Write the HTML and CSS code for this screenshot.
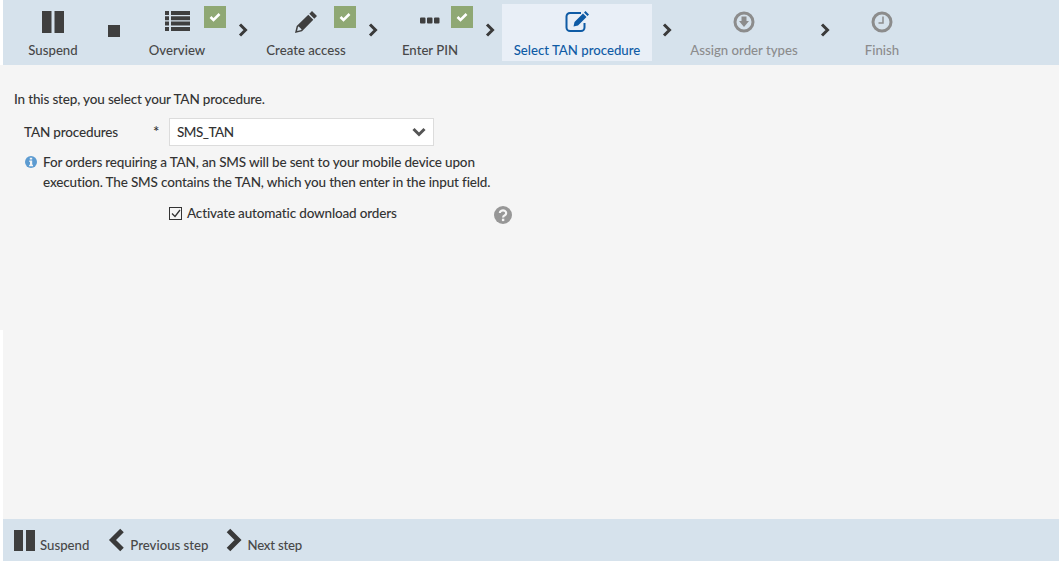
FILE: index.html
```
<!DOCTYPE html>
<html lang="en">
<head>
<meta charset="utf-8">
<title>Select TAN procedure</title>
<link rel="stylesheet" href="styles.css">
</head>
<body>
<div class="app">
  <header class="topbar">
    <div class="step step-suspend">
      <svg class="icon" width="22" height="22" viewBox="0 0 22 22"><path class="dark" d="M0 0h9.500v22H0zM12.500 0H22v22h-9.500z"/></svg>
      <span class="step-label">Suspend</span>
    </div>
    <div class="stop"></div>
    <div class="step step-overview">
      <svg class="icon" width="25" height="22" viewBox="0 0 25 22"><path class="dark" d="M0 0h4v4H0zM6 0h19v4H6zM0 5.300h4v4H0zM6 5.300h19v4H6zM0 10.600h4v4H0zM6 10.600h19v4H6zM0 15.900h4v4H0zM6 15.900h19v4H6z"/></svg>
      <span class="step-label">Overview</span>
      <span class="badge"><svg width="12" height="10" viewBox="0 0 12 10"><path d="M1.500 5l3 3 6-6" fill="none" stroke="#fff" stroke-width="2.600"/></svg></span>
    </div>
    <svg class="chev" width="10" height="14" viewBox="0 0 10 14"><path d="M2 1.500L7.500 7 2 12.500" fill="none" stroke="#3a3a3a" stroke-width="3"/></svg>
    <div class="step step-create">
      <svg class="icon" width="22" height="22" viewBox="0 0 22 22"><path class="dark" fill-rule="evenodd" d="M17 0l5 5-2.700 2.700-5-5zM13.300 3.700l5 5L7 20.300 0 22l1.700-7zM3 15.700l-.9 4.200 4.200-.9 .2-.7-2.800-2.800z"/></svg>
      <span class="step-label">Create access</span>
      <span class="badge"><svg width="12" height="10" viewBox="0 0 12 10"><path d="M1.500 5l3 3 6-6" fill="none" stroke="#fff" stroke-width="2.600"/></svg></span>
    </div>
    <svg class="chev" width="10" height="14" viewBox="0 0 10 14"><path d="M2 1.500L7.500 7 2 12.500" fill="none" stroke="#3a3a3a" stroke-width="3"/></svg>
    <div class="step step-pin">
      <svg class="icon" width="20" height="22" viewBox="0 0 20 22"><path class="dark" d="M0 7.500a1 1 0 0 1 1-1h3.500a1 1 0 0 1 1 1v4a1 1 0 0 1-1 1H1a1 1 0 0 1-1-1zM7 7.500a1 1 0 0 1 1-1h3.500a1 1 0 0 1 1 1v4a1 1 0 0 1-1 1H8a1 1 0 0 1-1-1zM14 7.500a1 1 0 0 1 1-1h3.500a1 1 0 0 1 1 1v4a1 1 0 0 1-1 1H15a1 1 0 0 1-1-1z"/></svg>
      <span class="step-label">Enter PIN</span>
      <span class="badge"><svg width="12" height="10" viewBox="0 0 12 10"><path d="M1.500 5l3 3 6-6" fill="none" stroke="#fff" stroke-width="2.600"/></svg></span>
    </div>
    <svg class="chev" width="10" height="14" viewBox="0 0 10 14"><path d="M2 1.500L7.500 7 2 12.500" fill="none" stroke="#3a3a3a" stroke-width="3"/></svg>
    <div class="step step-active">
      <svg class="icon" width="25" height="22" viewBox="0 1 25 22"><path d="M16 3H5a3.500 3.500 0 0 0-3.500 3.500v11A3.500 3.500 0 0 0 5 21h11a3.500 3.500 0 0 0 3.500-3.500V13" fill="none" stroke="#0f5ba5" stroke-width="2"/><path fill="#0f5ba5" d="M20.500 1l3.500 3.500-1.500 1.500L19 2.500zM18 3.500L21.500 7l-8.500 8.500-4.500 1 1-4.500z"/></svg>
      <span class="step-label">Select TAN procedure</span>
    </div>
    <svg class="chev chev-after-active" width="10" height="14" viewBox="0 0 10 14"><path d="M2 1.500L7.500 7 2 12.500" fill="none" stroke="#3a3a3a" stroke-width="3"/></svg>
    <div class="step step-assign step-disabled">
      <svg class="icon" width="22" height="22" viewBox="0 0 22 22"><circle cx="11" cy="11" r="9" fill="none" stroke="#8c8c8c" stroke-width="3"/><path fill="#8c8c8c" d="M8.500 5.500h5V10H16l-5 6-5-6h2.500z"/></svg>
      <span class="step-label">Assign order types</span>
    </div>
    <svg class="chev" width="10" height="14" viewBox="0 0 10 14"><path d="M2 1.500L7.500 7 2 12.500" fill="none" stroke="#3a3a3a" stroke-width="3"/></svg>
    <div class="step step-finish step-disabled">
      <svg class="icon" width="22" height="22" viewBox="0 0 22 22"><circle cx="11" cy="11" r="9" fill="none" stroke="#8c8c8c" stroke-width="3"/><path fill="none" stroke="#8c8c8c" stroke-width="1.500" d="M12 5.500V12H7.500"/></svg>
      <span class="step-label">Finish</span>
    </div>
  </header>

  <main class="main">
    <div class="panel">
      <p class="intro">In this step, you select your TAN procedure.</p>
      <div class="field">
        <label class="field-label">TAN procedures</label>
        <span class="required">*</span>
        <div class="select">
          <span class="select-value">SMS_TAN</span>
          <svg width="14" height="10" viewBox="0 0 14 10"><path d="M1.500 2L7 7.500 12.500 2" fill="none" stroke="#555" stroke-width="3"/></svg>
        </div>
      </div>
      <div class="hint">
        <svg class="hint-icon" width="12" height="12" viewBox="0 0 12 12"><circle cx="6" cy="6" r="6" fill="#5c9bd1"/><path fill="#f5f5f5" d="M4.800 1.800h2.400v1.700H4.800zM4.300 4.600h2.900v4.200h.8V10.200H4.100V8.800h.9V6H4.300z"/></svg>
        <p>For orders requiring a TAN, an SMS will be sent to your mobile device upon execution. The SMS contains the TAN, which you then enter in the input field.</p>
      </div>
      <div class="check-row">
        <span class="checkbox"><svg width="10" height="9" viewBox="0 0 10 9"><path d="M1 4.500l3 3 5-6.500" fill="none" stroke="#333" stroke-width="1.300"/></svg></span>
        <span class="check-label">Activate automatic download orders</span>
        <svg class="help" width="18" height="18" viewBox="0 0 18 18"><circle cx="9" cy="9" r="9" fill="#979797"/><path d="M5.800 7a3.200 2.700 0 1 1 4.800 2.400c-1 .6-1.500 1-1.500 2.100" fill="none" stroke="#f5f5f5" stroke-width="2.200"/><path fill="#f5f5f5" d="M7.900 12.700h2.400v2.400H7.900z"/></svg>
      </div>
    </div>
    <div class="panel-rest"></div>
  </main>

  <footer class="footbar">
    <svg width="21" height="21" viewBox="0 0 21 21"><path class="dark" d="M0 0h9v21H0zM12 0h9v21h-9z"/></svg>
    <span class="foot-label foot-suspend">Suspend</span>
    <svg class="foot-chev foot-chev-prev" width="18" height="24" viewBox="0 0 18 24"><path d="M14 2.500L4.500 12l9.500 9.500" fill="none" stroke="#3a3a3a" stroke-width="5"/></svg>
    <span class="foot-label foot-prev">Previous step</span>
    <svg class="foot-chev foot-chev-next" width="18" height="24" viewBox="0 0 18 24"><path d="M3.500 2.500L13 12l-9.500 9.500" fill="none" stroke="#3a3a3a" stroke-width="5"/></svg>
    <span class="foot-label foot-next">Next step</span>
  </footer>
</div>
</body>
</html>
```

FILE: styles.css
```
* { box-sizing: border-box; }
html, body { margin: 0; height: 100%; }
body {
  background: #fff;
  color: #333;
  font-family: "Lato", "Liberation Sans", sans-serif;
  font-size: 13.500px;
  font-weight: 500;
  letter-spacing: -0.160px;
  overflow: hidden;
}
.dark { fill: #3f3f3f; }
.app {
  height: 561px;
  padding-left: 3px;
  display: flex;
  flex-direction: column;
}
.topbar {
  height: 65px;
  background: #d6e2ec;
  display: flex;
  align-items: flex-start;
  flex: none;
}
.step {
  position: relative;
  flex: none;
  height: 57px;
  margin-top: 4px;
  display: flex;
  flex-direction: column;
  align-items: center;
  color: #484848;
  font-size: 13.200px;
  letter-spacing: 0;
}
.icon { margin-top: 7px; flex: none; }
.step-label { margin-top: 8px; line-height: 18px; white-space: nowrap; }
.step-suspend { width: 100px; }
.step-overview { width: 114px; }
.step-create { width: 116px; }
.step-pin { width: 102px; margin-left: 1px; }
.step-active { width: 150px; margin-left: 7px; background: #e9eff7; color: #0f5ba5; }
.step-assign { width: 144px; }
.step-finish { width: 104px; }
.step-disabled { color: #8c8c8c; }
.stop {
  width: 12px;
  height: 12px;
  margin: 25px 0 0 5px;
  background: #3f3f3f;
  flex: none;
}
.chev { margin-top: 23px; margin-left: 4px; flex: none; }
.chev-after-active { margin-left: 10px; }
.badge {
  position: absolute;
  top: 2px;
  right: 8px;
  width: 22px;
  height: 22px;
  background: #8fa874;
  display: flex;
  align-items: center;
  justify-content: center;
}

.main { flex: 1; display: flex; flex-direction: column; min-height: 0; }
.panel {
  height: 265px;
  margin-left: -3px;
  background: #f5f5f5;
  padding: 25px 0 0 14px;
  flex: none;
}
.panel-rest { flex: 1; background: #f5f5f5; }
.intro { margin: 0; line-height: 18px; }
.field { display: flex; align-items: center; margin: 10px 0 0 10px; height: 28px; }
.field-label { width: 129px; flex: none; }
.required { width: 16px; flex: none; align-self: flex-start; font-size: 15px; line-height: 20px; margin-top: 3px; }
.select {
  width: 265px;
  height: 28px;
  background: #fff;
  border: 1px solid #dcdcdc;
  display: flex;
  align-items: center;
  justify-content: space-between;
  padding: 0 7px;
}
.select-value { letter-spacing: -0.500px; }
.hint { display: flex; margin: 7px 0 0 11px; width: 480px; }
.hint-icon { margin-top: 3px; flex: none; }
.hint p { margin: 0 0 0 6px; line-height: 19.500px; }
.check-row { display: flex; align-items: center; margin: 11px 0 0 155px; height: 20px; }
.checkbox {
  width: 13px;
  height: 13px;
  border: 1px solid #333;
  display: flex;
  align-items: center;
  justify-content: center;
  flex: none;
}
.check-label { margin-left: 5px; width: 307px; flex: none; }
.help { flex: none; margin-top: 3px; }

.footbar {
  height: 42px;
  background: #d6e2ec;
  flex: none;
  display: flex;
  align-items: center;
  padding-left: 11px;
  color: #484848;
  font-size: 13.200px;
  letter-spacing: 0;
}
.foot-label { margin-top: 10px; white-space: nowrap; }
.foot-suspend { margin-left: 5px; }
.foot-chev { flex: none; }
.foot-chev-prev { margin-left: 19px; }
.foot-chev-next { margin-left: 17px; }
.foot-prev { margin-left: 4px; }
.foot-next { margin-left: 4px; letter-spacing: -0.200px; }
```
